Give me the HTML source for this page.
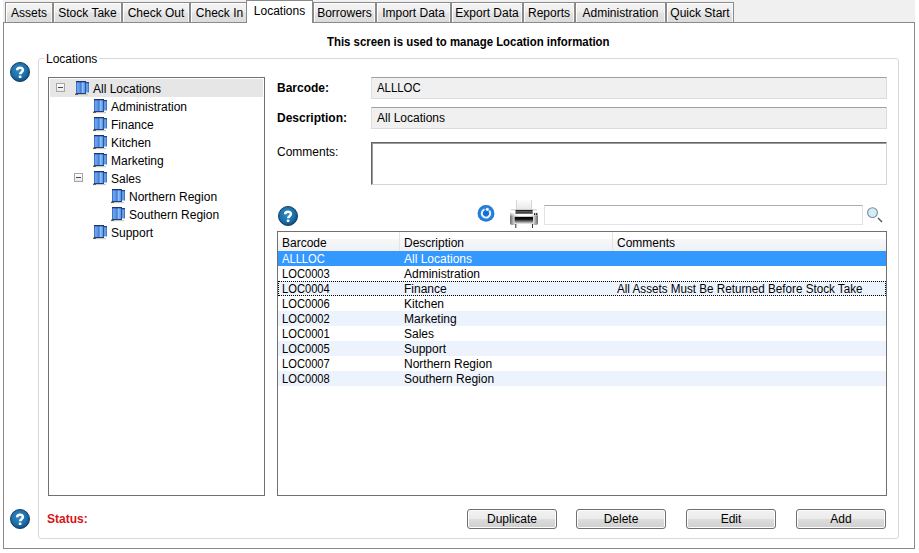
<!DOCTYPE html>
<html><head><meta charset="utf-8">
<style>
*{box-sizing:border-box;margin:0;padding:0}
html,body{width:919px;height:553px;overflow:hidden;background:#fff}
body{position:relative;font-family:"Liberation Sans",sans-serif;font-size:12px;color:#000}
.a{position:absolute}
.t{position:absolute;white-space:nowrap;line-height:15px}
#strip{left:3px;top:0;width:912px;height:22px;background:#f0f0f0}
.tab{position:absolute;top:2px;height:20px;border:1px solid #8a8a8a;border-bottom:none;
 background:linear-gradient(#f4f4f4 0%,#eeeeee 45%,#e3e3e3 55%,#dbdbdb 100%);
 box-shadow:inset 1px 1px 0 #fff, inset -1px 0 0 #f8f8f8}
.tab span{position:absolute;left:0;right:0;top:3px;text-align:center;line-height:14px}
#panel{left:3px;top:22px;width:912px;height:527px;border:1px solid #8a8a8a;background:#fff}
.tabact{position:absolute;top:0;height:23px;border:1px solid #8a8a8a;border-bottom:none;background:#fff;z-index:2}
.tabact span{position:absolute;left:0;right:0;top:3px;text-align:center;line-height:14px}
#grp{left:38px;top:58px;width:861px;height:481px;border:1px solid #d8d8d8;border-radius:3px}
.help{position:absolute;width:20px;height:20px}
.btn{position:absolute;top:509px;width:90px;height:20px;border:1px solid #707070;border-radius:3px;background:linear-gradient(#f2f2f2 0%,#ebebeb 50%,#dddddd 51%,#cfcfcf 100%);box-shadow:inset 0 0 0 1px #fcfcfc}
.btn span{position:absolute;left:0;right:0;top:2px;text-align:center;line-height:15px}
</style></head><body>
<div class="a" id="strip"></div>
<div class="a" id="panel"></div>
<div class="tab" style="left:5px;width:48px"><span>Assets</span></div>
<div class="tab" style="left:53px;width:69px"><span>Stock Take</span></div>
<div class="tab" style="left:122px;width:68px"><span>Check Out</span></div>
<div class="tab" style="left:190px;width:59px"><span>Check In</span></div>
<div class="tab" style="left:313px;width:63px"><span>Borrowers</span></div>
<div class="tab" style="left:376px;width:75px"><span>Import Data</span></div>
<div class="tab" style="left:451px;width:72px"><span>Export Data</span></div>
<div class="tab" style="left:523px;width:52px"><span>Reports</span></div>
<div class="tab" style="left:575px;width:91px"><span>Administration</span></div>
<div class="tab" style="left:666px;width:68px"><span>Quick Start</span></div>
<div class="tabact" style="left:246px;width:67px"><span>Locations</span></div>

<div class="t" style="left:327px;top:35px;font-weight:bold;transform:scaleX(0.95);transform-origin:0 0">This screen is used to manage Location information</div>

<div class="a" id="grp"></div>
<div class="t" style="left:44px;top:52px;background:#fff;padding:0 2px">Locations</div>

<div class="help" style="left:10px;top:62px"><svg width="20" height="20" viewBox="0 0 20 20"><defs><radialGradient id="hg" cx="45%" cy="40%" r="60%"><stop offset="0" stop-color="#2f8cc8"/><stop offset="0.65" stop-color="#1d70aa"/><stop offset="1" stop-color="#134c7e"/></radialGradient></defs><circle cx="10" cy="10" r="9.5" fill="url(#hg)" stroke="#123f66" stroke-width="1"/><path d="M7.2 8.2 C7.2 4.9 12.9 4.9 12.9 8.1 C12.9 10.1 10.1 10.2 10.1 12.3" fill="none" stroke="#fff" stroke-width="2.5"/><rect x="8.8" y="13.6" width="2.6" height="2.4" fill="#fff"/></svg></div>
<div class="help" style="left:278px;top:206px"><svg width="20" height="20" viewBox="0 0 20 20"><defs><radialGradient id="hg" cx="45%" cy="40%" r="60%"><stop offset="0" stop-color="#2f8cc8"/><stop offset="0.65" stop-color="#1d70aa"/><stop offset="1" stop-color="#134c7e"/></radialGradient></defs><circle cx="10" cy="10" r="9.5" fill="url(#hg)" stroke="#123f66" stroke-width="1"/><path d="M7.2 8.2 C7.2 4.9 12.9 4.9 12.9 8.1 C12.9 10.1 10.1 10.2 10.1 12.3" fill="none" stroke="#fff" stroke-width="2.5"/><rect x="8.8" y="13.6" width="2.6" height="2.4" fill="#fff"/></svg></div>
<div class="help" style="left:10px;top:509px"><svg width="20" height="20" viewBox="0 0 20 20"><defs><radialGradient id="hg" cx="45%" cy="40%" r="60%"><stop offset="0" stop-color="#2f8cc8"/><stop offset="0.65" stop-color="#1d70aa"/><stop offset="1" stop-color="#134c7e"/></radialGradient></defs><circle cx="10" cy="10" r="9.5" fill="url(#hg)" stroke="#123f66" stroke-width="1"/><path d="M7.2 8.2 C7.2 4.9 12.9 4.9 12.9 8.1 C12.9 10.1 10.1 10.2 10.1 12.3" fill="none" stroke="#fff" stroke-width="2.5"/><rect x="8.8" y="13.6" width="2.6" height="2.4" fill="#fff"/></svg></div>
<div class="a" style="left:48px;top:77px;width:217px;height:419px;border:1px solid #707070;background:#fff"></div>
<div class="a" style="left:50px;top:79px;width:213px;height:18px;background:#e6e6e6"></div>
<div class="a" style="left:56px;top:83px;width:9px;height:9px;border:1px solid #a6a6a6;background:linear-gradient(#fff,#e8e8e8)"><div class="a" style="left:1px;top:3px;width:5px;height:1px;background:#4a4a4a"></div></div>
<div class="a" style="left:74px;top:173px;width:9px;height:9px;border:1px solid #a6a6a6;background:linear-gradient(#fff,#e8e8e8)"><div class="a" style="left:1px;top:3px;width:5px;height:1px;background:#4a4a4a"></div></div>
<div class="a" style="left:74px;top:80px;width:16px;height:16px"><svg width="16" height="16" viewBox="0 0 16 16"><defs><linearGradient id="bg1" x1="0" x2="1"><stop offset="0" stop-color="#2c5ab8"/><stop offset="0.15" stop-color="#6aa4ec"/><stop offset="0.4" stop-color="#5a94e4"/><stop offset="0.5" stop-color="#3a6cd0"/><stop offset="0.62" stop-color="#8ec8f8"/><stop offset="0.88" stop-color="#5c98e6"/><stop offset="1" stop-color="#2a52ac"/></linearGradient><linearGradient id="bg2" x1="0" x2="1"><stop offset="0" stop-color="#2a54b0"/><stop offset="0.5" stop-color="#78b4f0"/><stop offset="1" stop-color="#3464c0"/></linearGradient></defs><rect x="1" y="14" width="13" height="1.2" fill="#b4b49a" opacity="0.7"/><rect x="1" y="13.6" width="3" height="1.4" fill="#4a4a3a" opacity="0.8"/><rect x="11" y="2" width="4" height="10.5" fill="url(#bg2)"/><rect x="2" y="1" width="10" height="13" fill="url(#bg1)"/><rect x="2" y="1" width="10" height="1.3" fill="#1c3470"/><rect x="11" y="2" width="4" height="1.2" fill="#22408a"/><rect x="2" y="13" width="10" height="1" fill="#243c78"/><rect x="11.3" y="2" width="0.7" height="12" fill="#2a4aa0"/></svg></div>
<div class="t" style="left:93px;top:82px">All Locations</div>
<div class="a" style="left:92px;top:98px;width:16px;height:16px"><svg width="16" height="16" viewBox="0 0 16 16"><defs><linearGradient id="bg1" x1="0" x2="1"><stop offset="0" stop-color="#2c5ab8"/><stop offset="0.15" stop-color="#6aa4ec"/><stop offset="0.4" stop-color="#5a94e4"/><stop offset="0.5" stop-color="#3a6cd0"/><stop offset="0.62" stop-color="#8ec8f8"/><stop offset="0.88" stop-color="#5c98e6"/><stop offset="1" stop-color="#2a52ac"/></linearGradient><linearGradient id="bg2" x1="0" x2="1"><stop offset="0" stop-color="#2a54b0"/><stop offset="0.5" stop-color="#78b4f0"/><stop offset="1" stop-color="#3464c0"/></linearGradient></defs><rect x="1" y="14" width="13" height="1.2" fill="#b4b49a" opacity="0.7"/><rect x="1" y="13.6" width="3" height="1.4" fill="#4a4a3a" opacity="0.8"/><rect x="11" y="2" width="4" height="10.5" fill="url(#bg2)"/><rect x="2" y="1" width="10" height="13" fill="url(#bg1)"/><rect x="2" y="1" width="10" height="1.3" fill="#1c3470"/><rect x="11" y="2" width="4" height="1.2" fill="#22408a"/><rect x="2" y="13" width="10" height="1" fill="#243c78"/><rect x="11.3" y="2" width="0.7" height="12" fill="#2a4aa0"/></svg></div>
<div class="t" style="left:111px;top:100px">Administration</div>
<div class="a" style="left:92px;top:116px;width:16px;height:16px"><svg width="16" height="16" viewBox="0 0 16 16"><defs><linearGradient id="bg1" x1="0" x2="1"><stop offset="0" stop-color="#2c5ab8"/><stop offset="0.15" stop-color="#6aa4ec"/><stop offset="0.4" stop-color="#5a94e4"/><stop offset="0.5" stop-color="#3a6cd0"/><stop offset="0.62" stop-color="#8ec8f8"/><stop offset="0.88" stop-color="#5c98e6"/><stop offset="1" stop-color="#2a52ac"/></linearGradient><linearGradient id="bg2" x1="0" x2="1"><stop offset="0" stop-color="#2a54b0"/><stop offset="0.5" stop-color="#78b4f0"/><stop offset="1" stop-color="#3464c0"/></linearGradient></defs><rect x="1" y="14" width="13" height="1.2" fill="#b4b49a" opacity="0.7"/><rect x="1" y="13.6" width="3" height="1.4" fill="#4a4a3a" opacity="0.8"/><rect x="11" y="2" width="4" height="10.5" fill="url(#bg2)"/><rect x="2" y="1" width="10" height="13" fill="url(#bg1)"/><rect x="2" y="1" width="10" height="1.3" fill="#1c3470"/><rect x="11" y="2" width="4" height="1.2" fill="#22408a"/><rect x="2" y="13" width="10" height="1" fill="#243c78"/><rect x="11.3" y="2" width="0.7" height="12" fill="#2a4aa0"/></svg></div>
<div class="t" style="left:111px;top:118px">Finance</div>
<div class="a" style="left:92px;top:134px;width:16px;height:16px"><svg width="16" height="16" viewBox="0 0 16 16"><defs><linearGradient id="bg1" x1="0" x2="1"><stop offset="0" stop-color="#2c5ab8"/><stop offset="0.15" stop-color="#6aa4ec"/><stop offset="0.4" stop-color="#5a94e4"/><stop offset="0.5" stop-color="#3a6cd0"/><stop offset="0.62" stop-color="#8ec8f8"/><stop offset="0.88" stop-color="#5c98e6"/><stop offset="1" stop-color="#2a52ac"/></linearGradient><linearGradient id="bg2" x1="0" x2="1"><stop offset="0" stop-color="#2a54b0"/><stop offset="0.5" stop-color="#78b4f0"/><stop offset="1" stop-color="#3464c0"/></linearGradient></defs><rect x="1" y="14" width="13" height="1.2" fill="#b4b49a" opacity="0.7"/><rect x="1" y="13.6" width="3" height="1.4" fill="#4a4a3a" opacity="0.8"/><rect x="11" y="2" width="4" height="10.5" fill="url(#bg2)"/><rect x="2" y="1" width="10" height="13" fill="url(#bg1)"/><rect x="2" y="1" width="10" height="1.3" fill="#1c3470"/><rect x="11" y="2" width="4" height="1.2" fill="#22408a"/><rect x="2" y="13" width="10" height="1" fill="#243c78"/><rect x="11.3" y="2" width="0.7" height="12" fill="#2a4aa0"/></svg></div>
<div class="t" style="left:111px;top:136px">Kitchen</div>
<div class="a" style="left:92px;top:152px;width:16px;height:16px"><svg width="16" height="16" viewBox="0 0 16 16"><defs><linearGradient id="bg1" x1="0" x2="1"><stop offset="0" stop-color="#2c5ab8"/><stop offset="0.15" stop-color="#6aa4ec"/><stop offset="0.4" stop-color="#5a94e4"/><stop offset="0.5" stop-color="#3a6cd0"/><stop offset="0.62" stop-color="#8ec8f8"/><stop offset="0.88" stop-color="#5c98e6"/><stop offset="1" stop-color="#2a52ac"/></linearGradient><linearGradient id="bg2" x1="0" x2="1"><stop offset="0" stop-color="#2a54b0"/><stop offset="0.5" stop-color="#78b4f0"/><stop offset="1" stop-color="#3464c0"/></linearGradient></defs><rect x="1" y="14" width="13" height="1.2" fill="#b4b49a" opacity="0.7"/><rect x="1" y="13.6" width="3" height="1.4" fill="#4a4a3a" opacity="0.8"/><rect x="11" y="2" width="4" height="10.5" fill="url(#bg2)"/><rect x="2" y="1" width="10" height="13" fill="url(#bg1)"/><rect x="2" y="1" width="10" height="1.3" fill="#1c3470"/><rect x="11" y="2" width="4" height="1.2" fill="#22408a"/><rect x="2" y="13" width="10" height="1" fill="#243c78"/><rect x="11.3" y="2" width="0.7" height="12" fill="#2a4aa0"/></svg></div>
<div class="t" style="left:111px;top:154px">Marketing</div>
<div class="a" style="left:92px;top:170px;width:16px;height:16px"><svg width="16" height="16" viewBox="0 0 16 16"><defs><linearGradient id="bg1" x1="0" x2="1"><stop offset="0" stop-color="#2c5ab8"/><stop offset="0.15" stop-color="#6aa4ec"/><stop offset="0.4" stop-color="#5a94e4"/><stop offset="0.5" stop-color="#3a6cd0"/><stop offset="0.62" stop-color="#8ec8f8"/><stop offset="0.88" stop-color="#5c98e6"/><stop offset="1" stop-color="#2a52ac"/></linearGradient><linearGradient id="bg2" x1="0" x2="1"><stop offset="0" stop-color="#2a54b0"/><stop offset="0.5" stop-color="#78b4f0"/><stop offset="1" stop-color="#3464c0"/></linearGradient></defs><rect x="1" y="14" width="13" height="1.2" fill="#b4b49a" opacity="0.7"/><rect x="1" y="13.6" width="3" height="1.4" fill="#4a4a3a" opacity="0.8"/><rect x="11" y="2" width="4" height="10.5" fill="url(#bg2)"/><rect x="2" y="1" width="10" height="13" fill="url(#bg1)"/><rect x="2" y="1" width="10" height="1.3" fill="#1c3470"/><rect x="11" y="2" width="4" height="1.2" fill="#22408a"/><rect x="2" y="13" width="10" height="1" fill="#243c78"/><rect x="11.3" y="2" width="0.7" height="12" fill="#2a4aa0"/></svg></div>
<div class="t" style="left:111px;top:172px">Sales</div>
<div class="a" style="left:110px;top:188px;width:16px;height:16px"><svg width="16" height="16" viewBox="0 0 16 16"><defs><linearGradient id="bg1" x1="0" x2="1"><stop offset="0" stop-color="#2c5ab8"/><stop offset="0.15" stop-color="#6aa4ec"/><stop offset="0.4" stop-color="#5a94e4"/><stop offset="0.5" stop-color="#3a6cd0"/><stop offset="0.62" stop-color="#8ec8f8"/><stop offset="0.88" stop-color="#5c98e6"/><stop offset="1" stop-color="#2a52ac"/></linearGradient><linearGradient id="bg2" x1="0" x2="1"><stop offset="0" stop-color="#2a54b0"/><stop offset="0.5" stop-color="#78b4f0"/><stop offset="1" stop-color="#3464c0"/></linearGradient></defs><rect x="1" y="14" width="13" height="1.2" fill="#b4b49a" opacity="0.7"/><rect x="1" y="13.6" width="3" height="1.4" fill="#4a4a3a" opacity="0.8"/><rect x="11" y="2" width="4" height="10.5" fill="url(#bg2)"/><rect x="2" y="1" width="10" height="13" fill="url(#bg1)"/><rect x="2" y="1" width="10" height="1.3" fill="#1c3470"/><rect x="11" y="2" width="4" height="1.2" fill="#22408a"/><rect x="2" y="13" width="10" height="1" fill="#243c78"/><rect x="11.3" y="2" width="0.7" height="12" fill="#2a4aa0"/></svg></div>
<div class="t" style="left:129px;top:190px">Northern Region</div>
<div class="a" style="left:110px;top:206px;width:16px;height:16px"><svg width="16" height="16" viewBox="0 0 16 16"><defs><linearGradient id="bg1" x1="0" x2="1"><stop offset="0" stop-color="#2c5ab8"/><stop offset="0.15" stop-color="#6aa4ec"/><stop offset="0.4" stop-color="#5a94e4"/><stop offset="0.5" stop-color="#3a6cd0"/><stop offset="0.62" stop-color="#8ec8f8"/><stop offset="0.88" stop-color="#5c98e6"/><stop offset="1" stop-color="#2a52ac"/></linearGradient><linearGradient id="bg2" x1="0" x2="1"><stop offset="0" stop-color="#2a54b0"/><stop offset="0.5" stop-color="#78b4f0"/><stop offset="1" stop-color="#3464c0"/></linearGradient></defs><rect x="1" y="14" width="13" height="1.2" fill="#b4b49a" opacity="0.7"/><rect x="1" y="13.6" width="3" height="1.4" fill="#4a4a3a" opacity="0.8"/><rect x="11" y="2" width="4" height="10.5" fill="url(#bg2)"/><rect x="2" y="1" width="10" height="13" fill="url(#bg1)"/><rect x="2" y="1" width="10" height="1.3" fill="#1c3470"/><rect x="11" y="2" width="4" height="1.2" fill="#22408a"/><rect x="2" y="13" width="10" height="1" fill="#243c78"/><rect x="11.3" y="2" width="0.7" height="12" fill="#2a4aa0"/></svg></div>
<div class="t" style="left:129px;top:208px">Southern Region</div>
<div class="a" style="left:92px;top:224px;width:16px;height:16px"><svg width="16" height="16" viewBox="0 0 16 16"><defs><linearGradient id="bg1" x1="0" x2="1"><stop offset="0" stop-color="#2c5ab8"/><stop offset="0.15" stop-color="#6aa4ec"/><stop offset="0.4" stop-color="#5a94e4"/><stop offset="0.5" stop-color="#3a6cd0"/><stop offset="0.62" stop-color="#8ec8f8"/><stop offset="0.88" stop-color="#5c98e6"/><stop offset="1" stop-color="#2a52ac"/></linearGradient><linearGradient id="bg2" x1="0" x2="1"><stop offset="0" stop-color="#2a54b0"/><stop offset="0.5" stop-color="#78b4f0"/><stop offset="1" stop-color="#3464c0"/></linearGradient></defs><rect x="1" y="14" width="13" height="1.2" fill="#b4b49a" opacity="0.7"/><rect x="1" y="13.6" width="3" height="1.4" fill="#4a4a3a" opacity="0.8"/><rect x="11" y="2" width="4" height="10.5" fill="url(#bg2)"/><rect x="2" y="1" width="10" height="13" fill="url(#bg1)"/><rect x="2" y="1" width="10" height="1.3" fill="#1c3470"/><rect x="11" y="2" width="4" height="1.2" fill="#22408a"/><rect x="2" y="13" width="10" height="1" fill="#243c78"/><rect x="11.3" y="2" width="0.7" height="12" fill="#2a4aa0"/></svg></div>
<div class="t" style="left:111px;top:226px">Support</div>
<div class="t" style="left:277px;top:81px;font-weight:bold">Barcode:</div>
<div class="t" style="left:277px;top:111px;font-weight:bold">Description:</div>
<div class="t" style="left:277px;top:145px">Comments:</div>
<div class="a" style="left:371px;top:77px;width:516px;height:22px;background:#f0f0f0;border:1px solid #dcdcdc;border-top-color:#a0a0a0"></div>
<div class="t" style="left:377px;top:81px;transform:scaleX(0.95);transform-origin:0 0">ALLLOC</div>
<div class="a" style="left:371px;top:107px;width:516px;height:22px;background:#f0f0f0;border:1px solid #dcdcdc;border-top-color:#a0a0a0"></div>
<div class="t" style="left:377px;top:111px">All Locations</div>
<div class="a" style="left:371px;top:142px;width:516px;height:43px;background:#fff;border:1px solid #d4d4d4;border-top-color:#646464;border-left-color:#646464;box-shadow:inset 1px 1px 0 #9a9a9a"></div>
<div class="a" style="left:477px;top:204px;width:18px;height:18px"><svg width="18" height="18" viewBox="0 0 18 18"><defs><radialGradient id="rg" cx="50%" cy="50%" r="50%"><stop offset="0" stop-color="#1560d0"/><stop offset="0.7" stop-color="#2a86e0"/><stop offset="1" stop-color="#1f6fd0"/></radialGradient></defs><circle cx="9" cy="9.4" r="8.4" fill="url(#rg)"/><path d="M7.56 5.45 A4.2 4.2 0 1 0 12.22 6.7" fill="none" stroke="#e8f6ff" stroke-width="1.9"/><circle cx="10.3" cy="5.3" r="1.6" fill="#e8f6ff"/></svg></div>
<div class="a" style="left:509px;top:199px;width:30px;height:30px"><svg width="30" height="30" viewBox="0 0 30 30"><defs><linearGradient id="pg" x1="0" x2="1"><stop offset="0" stop-color="#6a6a6a"/><stop offset="0.16" stop-color="#d8d8d8"/><stop offset="0.3" stop-color="#fff"/><stop offset="0.7" stop-color="#fff"/><stop offset="0.84" stop-color="#d8d8d8"/><stop offset="1" stop-color="#6a6a6a"/></linearGradient><linearGradient id="pv" x1="0" x2="0" y1="0" y2="1"><stop offset="0" stop-color="#fff" stop-opacity="1"/><stop offset="0.35" stop-color="#fff" stop-opacity="0"/></linearGradient><linearGradient id="pp" x1="0" x2="0" y1="0" y2="1"><stop offset="0" stop-color="#fdfdfd"/><stop offset="1" stop-color="#e6e6e6"/></linearGradient><linearGradient id="pb" x1="0" x2="0" y1="0" y2="1"><stop offset="0" stop-color="#0a0a0a"/><stop offset="0.5" stop-color="#6a6a6a"/><stop offset="1" stop-color="#0a0a0a"/></linearGradient><linearGradient id="ps" x1="0" x2="0" y1="0" y2="1"><stop offset="0" stop-color="#000"/><stop offset="0.35" stop-color="#151515"/><stop offset="1" stop-color="#f4f4f4"/></linearGradient></defs><rect x="7" y="1" width="16" height="10" fill="url(#pp)"/><rect x="7" y="1" width="0.8" height="10" fill="#cfcfcf"/><rect x="22.2" y="1" width="0.8" height="10" fill="#cfcfcf"/><path d="M1 13 H29 V24 Q29 26 27 26 H3 Q1 26 1 24 Z" fill="url(#pg)"/><rect x="1" y="13" width="28" height="13" fill="url(#pv)"/><rect x="2" y="10.5" width="26" height="0.8" fill="#b8b8b8"/><rect x="6.5" y="11" width="17.2" height="3.6" fill="url(#pb)"/><rect x="25" y="14" width="1.2" height="2" fill="#333"/><rect x="27" y="14" width="1.2" height="2" fill="#333"/><rect x="5.7" y="17.8" width="18.3" height="7.2" fill="url(#ps)"/><rect x="6.3" y="25" width="1" height="4" fill="#333"/><rect x="23" y="25" width="1" height="4" fill="#333"/></svg></div>
<div class="a" style="left:544px;top:205px;width:319px;height:20px;background:#fff;border:1px solid #e2e3ea;border-top-color:#abadb3"></div>
<div class="a" style="left:865px;top:205px;width:20px;height:20px"><svg width="20" height="20" viewBox="0 0 20 20"><line x1="13" y1="13" x2="17" y2="17" stroke="#555" stroke-width="1.5"/><circle cx="7.5" cy="7.6" r="4.9" fill="#d2ecf8" stroke="#7a8e9a" stroke-width="1.1"/></svg></div>
<div class="a" style="left:277px;top:231px;width:610px;height:265px;border:1px solid #707070;background:#fff"></div>
<div class="a" style="left:278px;top:232px;width:608px;height:19px;background:linear-gradient(#fff 0%,#fff 35%,#f6f7f9 40%,#eef0f3 100%)"></div>
<div class="a" style="left:399px;top:232px;width:1px;height:19px;background:#e3e4e6"></div>
<div class="a" style="left:612px;top:232px;width:1px;height:19px;background:#e3e4e6"></div>
<div class="t" style="left:282px;top:236px">Barcode</div>
<div class="t" style="left:404px;top:236px">Description</div>
<div class="t" style="left:617px;top:236px">Comments</div>
<div class="a" style="left:278px;top:251px;width:608px;height:15px;background:#3399ff"></div>
<div class="t" style="left:282px;top:252px;color:#fff;transform:scaleX(0.93);transform-origin:0 0">ALLLOC</div>
<div class="t" style="left:404px;top:252px;color:#fff">All Locations</div>
<div class="a" style="left:278px;top:266px;width:608px;height:15px;background:#fff"></div>
<div class="t" style="left:282px;top:267px;color:#000;transform:scaleX(0.93);transform-origin:0 0">LOC0003</div>
<div class="t" style="left:404px;top:267px;color:#000">Administration</div>
<div class="a" style="left:278px;top:281px;width:608px;height:15px;background:#edf3fc"></div>
<div class="a" style="left:278px;top:281px;width:608px;height:15px;border:1px dotted #000"></div>
<div class="t" style="left:282px;top:282px;color:#000;transform:scaleX(0.93);transform-origin:0 0">LOC0004</div>
<div class="t" style="left:404px;top:282px;color:#000">Finance</div>
<div class="t" style="left:617px;top:282px;color:#000;transform:scaleX(0.972);transform-origin:0 0">All Assets Must Be Returned Before Stock Take</div>
<div class="a" style="left:278px;top:296px;width:608px;height:15px;background:#fff"></div>
<div class="t" style="left:282px;top:297px;color:#000;transform:scaleX(0.93);transform-origin:0 0">LOC0006</div>
<div class="t" style="left:404px;top:297px;color:#000">Kitchen</div>
<div class="a" style="left:278px;top:311px;width:608px;height:15px;background:#edf3fc"></div>
<div class="t" style="left:282px;top:312px;color:#000;transform:scaleX(0.93);transform-origin:0 0">LOC0002</div>
<div class="t" style="left:404px;top:312px;color:#000">Marketing</div>
<div class="a" style="left:278px;top:326px;width:608px;height:15px;background:#fff"></div>
<div class="t" style="left:282px;top:327px;color:#000;transform:scaleX(0.93);transform-origin:0 0">LOC0001</div>
<div class="t" style="left:404px;top:327px;color:#000">Sales</div>
<div class="a" style="left:278px;top:341px;width:608px;height:15px;background:#edf3fc"></div>
<div class="t" style="left:282px;top:342px;color:#000;transform:scaleX(0.93);transform-origin:0 0">LOC0005</div>
<div class="t" style="left:404px;top:342px;color:#000">Support</div>
<div class="a" style="left:278px;top:356px;width:608px;height:15px;background:#fff"></div>
<div class="t" style="left:282px;top:357px;color:#000;transform:scaleX(0.93);transform-origin:0 0">LOC0007</div>
<div class="t" style="left:404px;top:357px;color:#000">Northern Region</div>
<div class="a" style="left:278px;top:371px;width:608px;height:15px;background:#edf3fc"></div>
<div class="t" style="left:282px;top:372px;color:#000;transform:scaleX(0.93);transform-origin:0 0">LOC0008</div>
<div class="t" style="left:404px;top:372px;color:#000">Southern Region</div>
<div class="t" style="left:47px;top:512px;font-weight:bold;color:#d81414">Status:</div>
<div class="btn" style="left:467px"><span>Duplicate</span></div>
<div class="btn" style="left:576px"><span>Delete</span></div>
<div class="btn" style="left:686px"><span>Edit</span></div>
<div class="btn" style="left:796px"><span>Add</span></div>
</body></html>
